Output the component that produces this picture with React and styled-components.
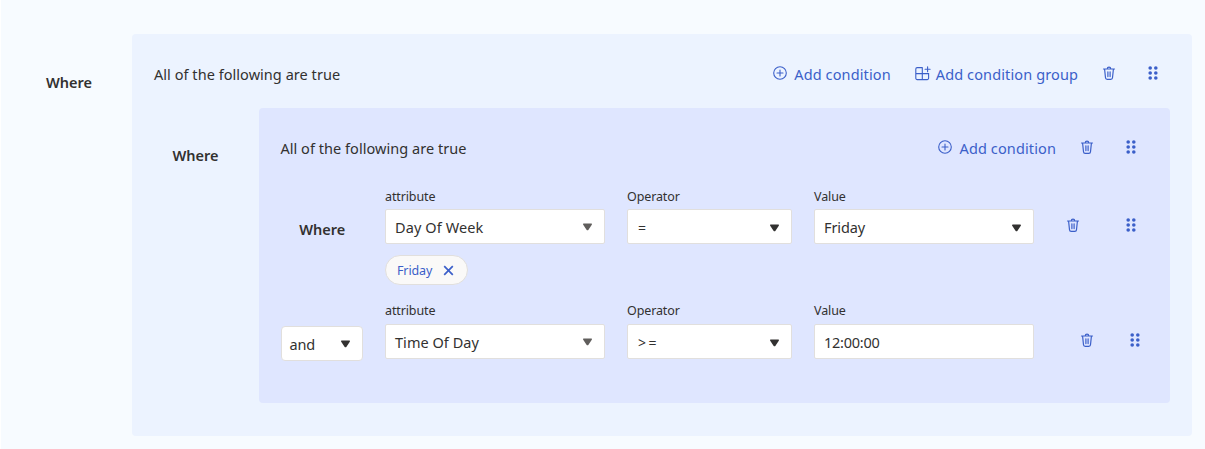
import React from 'react';
import styled, { createGlobalStyle } from 'styled-components';

const GlobalStyle = createGlobalStyle`
  * { box-sizing: border-box; }
  body {
    margin: 0;
    background: #f7fbff;
    color: #323130;
    font-family: "Noto Sans", "Open Sans", sans-serif;
    font-size: 14.5px;
    line-height: 20px;
  }
`;

const Page = styled.main`
  display: flex;
  align-items: flex-start;
  min-height: 449px;
  padding: 34px 13px 13px 0;
  border-left: 1px solid #fff;
`;

const Lead = styled.div`
  flex: none;
  width: ${(p) => p.$width}px;
  margin-top: ${(p) => p.$top}px;
  padding-left: ${(p) => p.$indent}px;
  font-weight: 600;
`;

const Panel = styled.section`
  flex: 1;
  min-width: 0;
  height: ${(p) => p.$height}px;
  background: ${(p) => p.$color};
  border-radius: 4px;
`;

const PanelHeader = styled.header`
  display: flex;
  align-items: center;
  height: 74px;
  padding: 5px 33px 0 ${(p) => p.$indent}px;
`;

const Title = styled.div`
  flex: 1;
  letter-spacing: 0.045px;
`;

const Nested = styled.div`
  display: flex;
  align-items: flex-start;
  padding-right: 22px;
`;

const AddButton = styled.button`
  display: flex;
  align-items: center;
  margin-right: 24px;
  padding: 0;
  border: 0;
  background: none;
  color: #3b5fc9;
  font: inherit;
  letter-spacing: 0.12px;
  white-space: nowrap;
  svg { margin: -1px ${(p) => p.$gap}px 0 0; }
`;

const IconButton = styled.button`
  display: flex;
  padding: 0;
  border: 0;
  background: none;
`;

const Actions = styled.div`
  display: flex;
  gap: ${(p) => p.$gap}px;
  margin: ${(p) => p.$top || 0}px 0 0 ${(p) => p.$left || 0}px;
`;

const HeaderActions = styled(Actions)`
  margin-top: -1px;
`;

const Row = styled.div`
  display: flex;
  align-items: flex-start;
  padding-top: ${(p) => p.$top}px;
`;

const Field = styled.div`
  width: ${(p) => p.$width}px;
  margin-right: ${(p) => (p.$last ? 0 : 22)}px;
`;

const Label = styled.div`
  height: 18px;
  margin-bottom: ${(p) => p.$gap}px;
  padding-top: 1px;
  font-size: 12.5px;
  line-height: 18px;
  letter-spacing: -0.12px;
`;

const Control = styled.div`
  display: flex;
  align-items: center;
  justify-content: space-between;
  height: 35px;
  padding: 1px 11px 0 ${(p) => (p.$compact ? 7.5 : 9)}px;
  width: ${(p) => (p.$compact ? '82px' : '100%')};
  border: 1px solid #e1dfdd;
  border-radius: ${(p) => (p.$compact ? 4 : 2)}px;
  background: #fff;
  font-weight: 400;
`;

const ControlText = styled.span`
  letter-spacing: ${(p) => p.$spacing || 0}px;
`;

const OperatorText = styled.span`
  padding: 2px 0 0 1px;
  font-size: 14px;
  letter-spacing: 2.5px;
`;

const Arrow = styled.svg`
  display: block;
  margin-top: ${(p) => p.$shift}px;
  fill: ${(p) => p.$color};
`;

const Chip = styled.div`
  display: flex;
  align-items: center;
  gap: 10.5px;
  height: 30px;
  width: 82.5px;
  margin-top: 11px;
  padding-left: 11px;
  border: 1px solid #e1dfdd;
  border-radius: 15px;
  background: #faf9f8;
  color: #3b5fc9;
  font-size: 12.5px;
  letter-spacing: -0.12px;
`;

const ChipText = styled.span`
  padding-top: 1px;
`;

const BLUE = '#3b5fc9';

const PlusCircle = () => (
  <svg width="14" height="14" viewBox="0 0 14 14" fill="none" stroke={BLUE} strokeWidth="1.1">
    <circle cx="7" cy="7" r="6.3" />
    <path d="M7 4v6M4 7h6" strokeLinecap="round" />
  </svg>
);

const GroupAdd = () => (
  <svg width="16" height="15" viewBox="0 0 16 15" fill="none" stroke={BLUE} strokeWidth="1.1" strokeLinecap="round">
    <path d="M7.3 1.6H2.2A1.4 1.4 0 0 0 .8 3v9.2a1.4 1.4 0 0 0 1.4 1.4h10a1.4 1.4 0 0 0 1.4-1.4V7.6H.8M7.3 1.6v12" />
    <path d="M12.6.8v5M10.1 3.3h5" />
  </svg>
);

const Trash = () => (
  <svg width="14" height="14" viewBox="0 0 14 14" fill="none" stroke={BLUE} strokeWidth="1.2" strokeLinecap="round" strokeLinejoin="round">
    <path d="M1.5 3h11M5.3 2.8a1.7 1.7 0 0 1 3.4 0M2.6 3.2l.9 8.6a1.7 1.7 0 0 0 1.7 1.6h3.6a1.7 1.7 0 0 0 1.7-1.6l.9-8.6M5.9 5.8v4.8M8.1 5.8v4.8" />
  </svg>
);

const Grip = () => (
  <svg width="12" height="14" viewBox="0 0 12 14" fill={BLUE}>
    {[2, 7, 12].map((y) => (
      <React.Fragment key={y}>
        <circle cx="3.2" cy={y} r="1.8" />
        <circle cx="8.8" cy={y} r="1.8" />
      </React.Fragment>
    ))}
  </svg>
);

const Cross = () => (
  <svg width="11" height="11" viewBox="0 0 11 11" stroke={BLUE} strokeWidth="1.7">
    <path d="M1.2 1.2l8.6 8.6M9.8 1.2L1.2 9.8" />
  </svg>
);

const Caret = ({ color = '#323130', shift = 1 }) => (
  <Arrow width="11" height="8" viewBox="0 0 11 8" $color={color} $shift={shift}>
    <path d="M1.8.6h7.4c.7 0 1 .7.6 1.2L6.5 6.7c-.5.7-1.5.7-2 0L1.2 1.8C.8 1.3 1.1.6 1.8.6z" />
  </Arrow>
);

const DeleteAndDrag = () => (
  <>
    <IconButton aria-label="Delete"><Trash /></IconButton>
    <IconButton aria-label="Drag"><Grip /></IconButton>
  </>
);

const GroupHeader = ({ nestable }) => (
  <PanelHeader $indent={nestable ? 22 : 21.4}>
    <Title>All of the following are true</Title>
    <AddButton $gap={7.5}><PlusCircle />Add condition</AddButton>
    {nestable && <AddButton $gap={5}><GroupAdd />Add condition group</AddButton>}
    <HeaderActions $gap={31}><DeleteAndDrag /></HeaderActions>
  </PanelHeader>
);

export default function App() {
  return (
    <>
      <GlobalStyle />
      <Page>
        <Lead $width={131} $top={38} $indent={45}>Where</Lead>
        <Panel $height={402} $color="#ecf3ff">
          <GroupHeader nestable />
          <Nested>
            <Lead $width={127} $top={37} $indent={40.5}>Where</Lead>
            <Panel $height={295} $color="#dfe6ff">
              <GroupHeader />
              <Row $top={5}>
                <Lead $width={126} $top={32} $indent={40.3}>Where</Lead>
                <Field $width={220}>
                  <Label $gap={4}>attribute</Label>
                  <Control>
                    <ControlText $spacing={0.1}>Day Of Week</ControlText>
                    <Caret color="#605e5c" shift={-1} />
                  </Control>
                  <Chip><ChipText>Friday</ChipText><Cross /></Chip>
                </Field>
                <Field $width={165}>
                  <Label $gap={4}>Operator</Label>
                  <Control><OperatorText>=</OperatorText><Caret /></Control>
                </Field>
                <Field $width={220} $last>
                  <Label $gap={4}>Value</Label>
                  <Control><ControlText $spacing={-0.1}>Friday</ControlText><Caret /></Control>
                </Field>
                <Actions $left={32} $top={31} $gap={45}><DeleteAndDrag /></Actions>
              </Row>
              <Row $top={16}>
                <Lead $width={126} $top={25} $indent={22}>
                  <Control $compact><ControlText $spacing={-0.2}>and</ControlText><Caret shift={0} /></Control>
                </Lead>
                <Field $width={220}>
                  <Label $gap={5}>attribute</Label>
                  <Control>
                    <ControlText $spacing={0.04}>Time Of Day</ControlText>
                    <Caret color="#605e5c" shift={-1} />
                  </Control>
                </Field>
                <Field $width={165}>
                  <Label $gap={5}>Operator</Label>
                  <Control><OperatorText>&gt;=</OperatorText><Caret /></Control>
                </Field>
                <Field $width={220} $last>
                  <Label $gap={5}>Value</Label>
                  <Control><ControlText $spacing={-0.24}>12:00:00</ControlText></Control>
                </Field>
                <Actions $left={46} $top={32} $gap={35}><DeleteAndDrag /></Actions>
              </Row>
            </Panel>
          </Nested>
        </Panel>
      </Page>
    </>
  );
}
